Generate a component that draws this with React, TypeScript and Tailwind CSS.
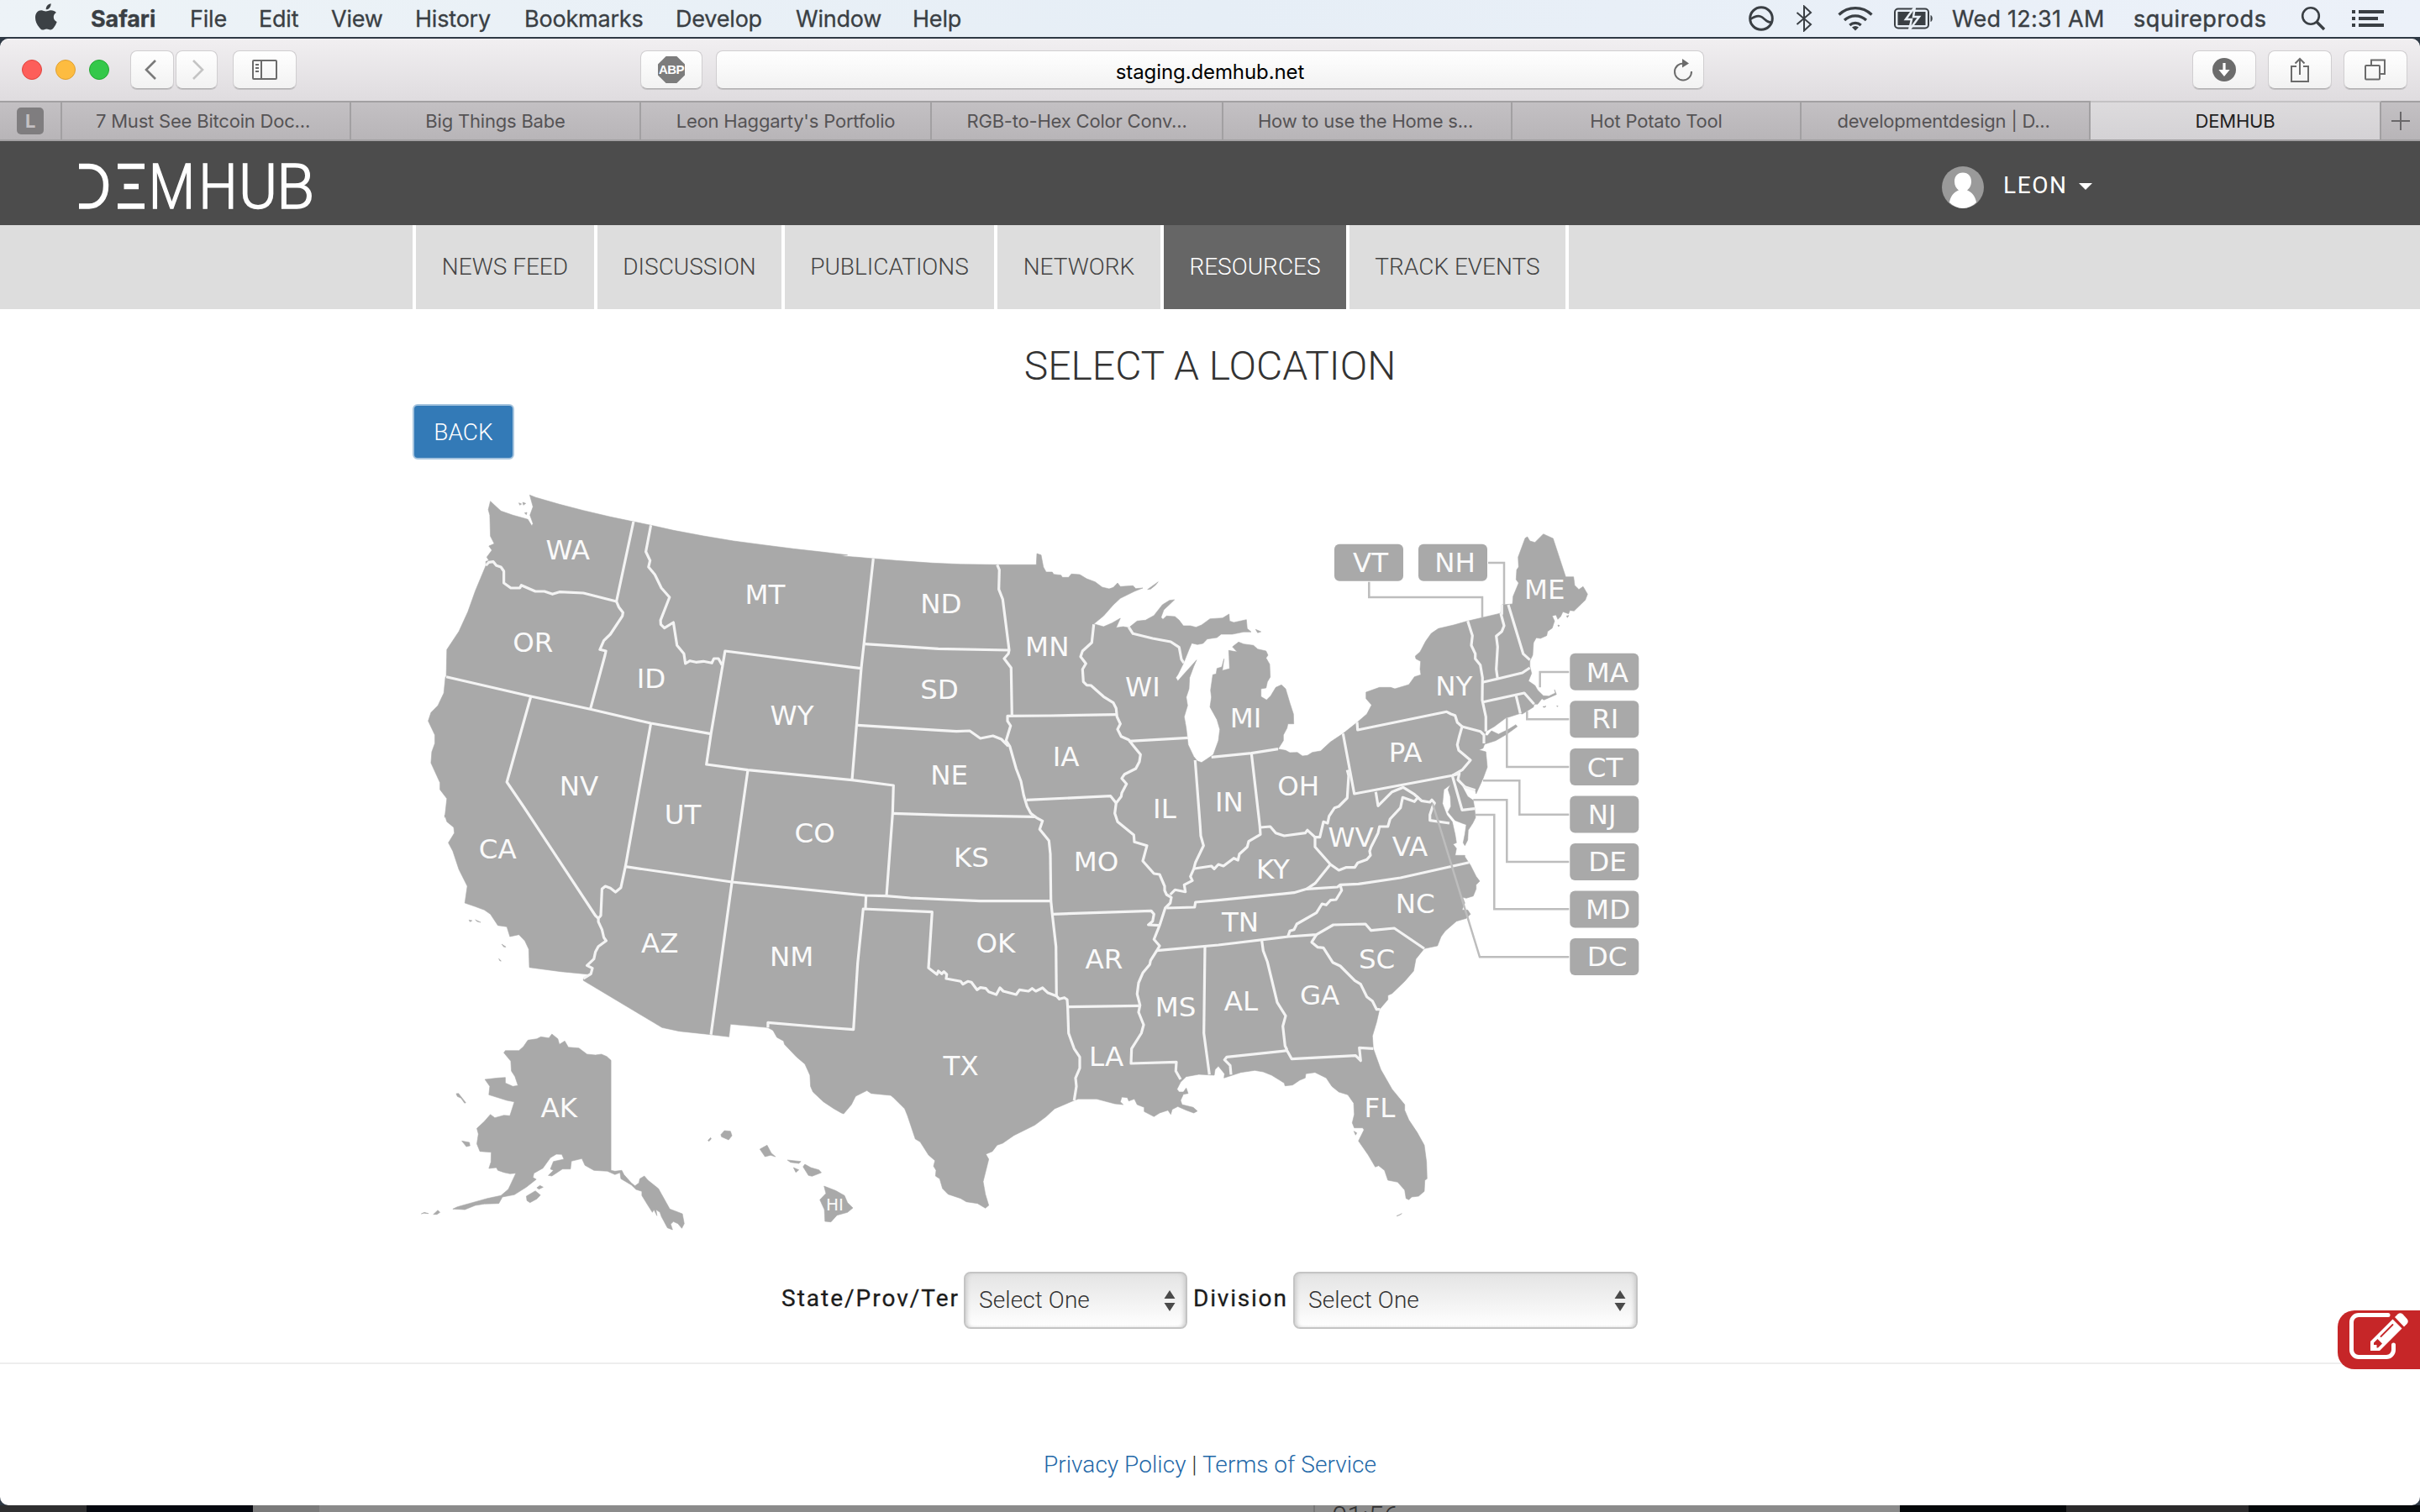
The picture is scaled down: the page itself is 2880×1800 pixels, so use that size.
import React from "react";

type Pt = [number, number];

/* Each sheet turns its own local survey units into map coordinates. */
const sheet =
  (ox: number, oy: number, sx: number, sy: number) =>
  (s: string): Pt[] =>
    s
      .trim()
      .split(/\s+/)
      .map((p) => {
        const [x, y] = p.split(",").map(Number);
        return [ox + x / sx, oy + y / sy] as Pt;
      });

const A = sheet(480, 560, 2.8, 3);
const B = sheet(480, 960, 2.8, 3);
const C = sheet(1000, 640, 3, 3);
const D = sheet(1000, 1000, 3, 3);
const E = sheet(1450, 620, 3, 3);
const F = sheet(1450, 1000, 3, 3);

const line = (...parts: Pt[][]) =>
  "M" + parts.flat().map(([x, y]) => `${x.toFixed(1)} ${y.toFixed(1)}`).join("L");

const mainland = line(
  A("421,88 440,96 520,121 600,143 690,166 767,183 825,196 900,214 1000,234 1100,252 1200,266 1300,280 1400,292 1480,302"),
  C("0,65 60,70 118,75 200,82 330,91 430,95 560,97 700,97 702,57 717,62 725,105 735,123 757,123 762,131 788,134 793,142 815,142 825,130 855,132 880,147 910,158 935,177 960,183 975,178 990,162 1000,175 1045,172 1055,182 1080,180"),
  C("1050,192 1000,217 975,240 940,280 905,308 940,318 970,305 1000,288 985,322 1010,318 1030,322 1060,298 1090,295 1120,278 1150,240 1175,224 1193,222 1180,235 1155,258 1145,285 1152,292 1165,280 1195,282 1210,295 1225,315 1250,315 1270,320 1290,312 1320,290 1365,287 1388,273 1390,298 1405,303 1450,293 1453,325 1467,337 1440,337 1400,345 1360,345 1345,357 1310,362 1295,378 1275,382 1255,377 1245,400 1225,450 1205,490 1198,500 1205,512 1220,495 1272,437 1262,460 1247,500 1245,540 1235,570 1240,600 1228,640 1235,680 1242,740 1262,782 1275,798 1290,803 1310,790 1332,775 1350,725 1355,685 1345,650 1320,605 1325,570 1322,545 1330,490 1342,487 1345,467 1362,462 1370,433 1364,475 1390,468 1388,425 1387,403 1417,408 1400,390"),
  E("72,433 90,440 125,445 140,458 170,465 177,480 170,490 183,512 185,558 175,575 170,597 152,600 152,628 172,640 187,625 205,595 225,586 240,600 255,650 268,690 269,725 248,725 245,740 232,765 232,785 213,815 240,820 255,828 282,827 300,840 318,838 335,827 365,822 400,790 445,760 495,720 530,690 547,658 527,635 527,612 575,595 615,595 630,600 680,585 700,557 723,550 720,530 722,502 705,493 703,483 720,468 740,430 760,402 785,385 840,372 890,358 1008,330 1012,300 1050,297 1052,270 1072,222 1063,210 1065,175 1072,165 1070,130 1095,62 1103,57 1112,72 1130,77 1160,47 1195,63 1240,200 1268,200 1272,230 1287,245 1302,235 1318,262 1310,283 1270,322 1255,320 1250,332 1230,325 1222,342 1212,352 1205,336 1192,340 1200,358 1192,383 1175,395 1172,410 1150,420 1135,418 1125,435 1122,480 1112,500 1112,520 1118,545 1107,572 1130,588 1140,605 1160,625 1180,626 1203,615 1200,603 1207,620 1180,632 1162,640 1155,635 1140,655 1127,655 1125,665 1085,690 1078,688 1025,705 985,735 955,752 952,764 960,768 975,750 1000,762 1035,745 1062,728 1067,735 1030,762 990,785 950,798 945,812 930,818 955,825 960,880 945,920 920,975 917,962 892,955 868,935 858,912 866,940 890,985 910,998 915,1030 918,1060 908,1080 892,1105 890,1140 880,1160 874,1150 880,1120 885,1085 870,1080 845,1070 820,1040 830,1020 828,985 820,960 828,943 805,960 800,1010 815,1050 835,1075 845,1120 850,1150 838,1155 850,1170 845,1195 865,1195 880,1195"),
  F("880,60 900,90 920,130 933,147 920,160 920,175 910,200 885,208 872,205 880,225 870,250 890,250 900,265 885,280 850,290 810,325 795,345 782,378 735,388 705,425 697,468 665,505 620,548 605,555 605,570 575,605 565,650 550,700 553,745 580,820 620,890 665,945 665,965 680,1000 710,1045 735,1090 743,1150 745,1210 737,1215 735,1255 715,1272 690,1275 680,1285 670,1280 665,1250 640,1222 605,1215 593,1180 572,1163 560,1168 535,1125 500,1075 520,1035 515,1028 485,1028 478,1010 485,980 483,940 462,910 430,900 405,880 385,850 345,830 312,835 310,850 290,858 265,875 238,878 235,868 190,840 160,828 130,823 80,830 20,850"),
  D("1372,835 1350,808 1338,820 1335,840 1280,837 1235,845 1215,865 1202,890 1210,900 1225,900 1235,886 1242,905 1225,908 1215,930 1220,945 1260,955 1275,968 1262,975 1235,965 1205,952 1185,962 1180,980 1170,965 1140,975 1120,988 1085,970 1085,955 1060,945 1050,925 1030,932 1025,920 1005,918 1000,935 1010,945 980,942 915,925 850,925 835,930 765,960 735,988 695,1018 620,1055 580,1083 560,1090 543,1112 520,1122 530,1140 510,1220 518,1265 530,1305 518,1315 490,1298 450,1292 430,1280 385,1265 365,1245 355,1210 340,1200 342,1180 333,1165 338,1145 315,1125 285,1078 268,1068 240,985 230,960 190,920 180,912 110,905 95,895 55,915 40,945 12,978 4,975"),
  B("1435,1080 1400,1055 1365,1020 1357,1000 1355,960 1338,920 1310,895 1270,850 1267,838 1245,825 1232,800 1215,790 1090,778 1085,823 1025,815 920,803 862,790 600,622 600,615 620,600 525,590 420,575 418,510 405,480 385,458 355,465 345,430 315,425 290,385 270,370 240,358 205,345 213,285 185,225 165,160 150,130 170,95 168,75 145,55 138,30"),
  A("138,1240 145,1172 122,1140 122,1115 92,1045 95,1005 105,975 105,945 83,895 92,865 115,840 135,795 140,740 143,735 145,640 185,575 215,505 240,430 275,340 275,325 285,322 278,310 295,285 285,270 303,262 290,235 288,160 283,140 290,110 325,145 365,160 400,170 415,175 428,198 432,190 422,160 432,130"),
) + "Z";

const islands = [
  B("692,907 692,1300 705,1303 728,1300 735,1315 760,1345 772,1355 785,1345 788,1330 803,1320 815,1335 850,1365 888,1438 930,1455 936,1490 928,1507 915,1490 900,1483 891,1492 897,1512 880,1505 860,1465 855,1450 842,1440 845,1462 835,1440 830,1450 815,1425 795,1390 795,1375 775,1368 760,1352 725,1330 722,1308 705,1315 680,1303 635,1300 605,1282 595,1258 560,1267 557,1295 530,1295 495,1320 483,1318 500,1300 490,1295 500,1268 535,1260 528,1243 510,1242 490,1255 465,1292 435,1310 432,1325 443,1332 410,1360 370,1387 330,1395 318,1418 270,1420 240,1425 205,1440 165,1438 180,1430 230,1415 280,1400 325,1390 350,1367 375,1310 355,1312 335,1307 315,1300 310,1290 285,1293 292,1270 293,1235 255,1232 245,1205 250,1170 245,1150 270,1125 290,1100 305,1112 335,1103 355,1105 370,1055 345,1050 285,1030 288,1000 272,975 315,970 340,968 340,988 365,1000 382,997 372,965 360,945 358,910 335,880 340,872 385,872 400,858 415,835 445,830 458,823 485,827 495,813 515,830 520,850 538,838 550,860 585,863 612,885 640,888 660,885 678,893"),
  B("410,1392 440,1373 457,1388 445,1402 422,1415 412,1408"),
  B("445,1362 455,1354 466,1360 452,1367"),
  B("195,1195 220,1200 222,1212 210,1215"),
  B("176,1026 184,1025 208,1058 204,1060 192,1042 180,1036"),
  B("100,1457 115,1442 122,1450 112,1457"),
  B("60,1455 70,1450 84,1454 68,1453"),
  B("1058,1172 1070,1158 1090,1160 1095,1176 1084,1191 1060,1180"),
  B("1015,1193 1024,1183 1026,1188 1018,1196"),
  B("1188,1224 1212,1210 1226,1238 1240,1251 1224,1246 1205,1251"),
  B("1280,1263 1325,1268 1318,1275 1290,1271"),
  B("1300,1290 1318,1298 1308,1307"),
  B("1332,1287 1338,1278 1358,1290 1385,1298 1393,1308 1362,1321 1350,1318"),
  B("1402,1356 1440,1372 1470,1390 1480,1415 1498,1434 1480,1450 1445,1460 1425,1484 1405,1482 1403,1440 1388,1405 1408,1382"),
  B("240,405 258,414 246,411"),
  B("219,406 229,408 222,412"),
  B("328,492 342,502 335,502"),
  B("318,544 326,552 322,552"),
  C("1097,185 1135,158 1125,170 1108,184"),
  C("1483,328 1502,336 1490,340"),
  E("1158,664 1170,662 1164,667"),
  E("1208,661 1213,662 1209,664"),
  E("1212,372 1218,374 1214,378"),
  E("1243,340 1251,338 1246,346"),
  F("636,1343 655,1334 646,1340"),
  F("484,1040 494,1046 490,1054"),
  A("385,116 394,120 388,124"),
  A("398,114 408,118 400,124"),
  A("404,152 412,150 410,158"),
]
  .map((p) => line(p) + "Z")
  .join("");

const borders = [
  line(A("275,340 285,328 300,326 310,340 325,345 335,360 335,402 358,420 388,420 393,410 440,432 470,432 497,442 520,434 600,438 710,468")),
  line(A("767,183 710,468 718,488 732,508 730,520 690,585 668,608 655,640 675,645 672,660 623,853")),
  line(A("143,737 425,807 623,853 825,903 1025,941")),
  line(A("825,196 808,290 822,322 817,345 838,372 860,420 887,453 857,535 858,550 870,563 900,543 912,625 935,655 940,690 955,680 975,685 1000,682 1028,688 1035,672 1050,672 1062,695")),
  line(A("1525,707 1072,645 1025,941 1010,1050 1148,1070"), C("42,866 190,885 187,985"), D("165,200")),
  line(C("118,75 75,465 42,866")),
  line(A("425,807 345,1113"), B("400,0 640,390 650,400")),
  line(A("825,903"), B("740,215 725,290 707,306 690,292 673,285 662,295 658,390 650,400 650,412 662,440 668,468 676,480 650,500 640,520 635,545 612,568 630,578 625,598 600,615")),
  line(B("740,215 1095,270 1540,318"), D("165,200 250,207 500,218 750,218")),
  line(A("1148,1070"), B("1095,270 1025,815")),
  line(D("92,195 90,243")),
  line(B("1215,790 1215,772 1400,789 1500,797"), D("62,440 82,246 328,257 315,457 345,480 350,468 362,478 370,470 380,480 378,495 430,505 438,515 455,505 468,508 488,535 500,527 520,530 530,542 557,552 570,528 582,540 628,552 640,535 672,540 685,530 698,540 722,528 740,545 772,557 782,568 800,563 810,570 812,600 815,690 835,745 855,775 855,815 840,850 843,880 835,930")),
  line(C("187,985 400,992 695,997")),
  line(C("88,380 350,397 600,402")),
  line(C("62,670 350,688 415,692 462,690 500,717 545,708 575,720 600,745")),
  line(C("560,97 568,115 566,185 580,220 590,300 603,402 600,415 585,432 610,465 613,635")),
  line(C("985,632 750,636 597,637 597,655 608,672 592,725 605,745 628,825 645,870 655,920 667,960 680,985 700,1000 722,1012 712,1042 745,1082"), D("750,50 752,218 757,265 770,380 772,557")),
  line(C("665,937 965,923 985,948")),
  line(C("905,310 898,375 865,405 858,425 877,450 865,470 868,515 880,527 895,528 940,568 975,590 985,610 988,640 1000,665 990,685 1003,710 1030,722 1045,742 1072,775 1068,800 1055,825 1015,845 1005,860 1022,880 1005,912 1003,925 985,948 980,985 990,1015 1048,1062 1050,1087 1095,1100 1080,1155 1120,1200 1140,1203 1158,1245"), D("1158,180 1165,195 1182,205 1178,225 1160,243 1140,305 1120,355 1140,378 1130,395 1108,430 1105,445 1080,475 1065,510 1060,550 1070,590 1065,615 1083,660 1075,690 1040,745 1038,798 1200,793 1198,825 1215,855")),
  line(C("1030,727 1242,715")),
  line(C("1030,320 1045,343 1115,360 1180,372 1210,392 1218,435 1227,448")),
  line(C("1267,795 1285,1030 1287,1065 1297,1100 1268,1160 1262,1183 1250,1210"), D("1257,145 1228,160 1232,185 1195,178 1178,195")),
  line(C("1325,784 1468,770"), E("213,815")),
  line(E("118,830 148,1090 150,1120 108,1145 103,1165 75,1190 70,1212"), D("1405,65 1368,93 1350,87 1335,103 1325,93 1265,102")),
  line(E("150,1095 185,1092 205,1115 235,1125 310,1115 318,1105 345,1130 362,1130 375,1075 390,1080 395,1055 415,1025 430,1020 460,990 465,910 460,890")),
  line(E("445,760 485,975 835,910 870,890 900,855 858,820 853,800 860,770 870,735 853,720 845,695 830,690 815,682 497,747 495,718")),
  line(E("870,735 935,752 948,765 948,795")),
  line(E("890,358 907,410 903,445 917,475 917,493 935,515 943,560 942,640 955,700 955,752")),
  line(E("1008,330 1020,375 1012,395 992,412 997,450 992,530 997,565")),
  line(E("1012,300 1012,335")),
  line(E("1035,300 1088,475 1112,497")),
  line(E("943,577 1085,543 1112,525")),
  line(E("945,647 1092,615 1127,655")),
  line(E("1063,625 1078,688")),
  line(E("835,910 870,1033 915,1028")),
  line(E("835,910 860,903 855,925 880,950 917,962")),
  line(E("562,968 570,1018 620,968 660,952 700,977 725,1000 755,1005 762,997 772,1008 765,1020 755,1050 755,1070 825,1080")),
  line(E("715,985 700,1003 658,988 650,1025 613,1065 605,1092 575,1092 570,1115 545,1165"), F("540,40 543,55 530,70 497,82 487,98 455,98 430,108 400,87 345,25 345,-10")),
  line(F("400,87 345,155 315,175")),
  line(D("1165,243 1265,240 1268,222"), F("0,215 270,188 315,175 425,168 435,160 500,157 650,135 895,80")),
  line(D("757,265 1110,253 1120,265 1115,290 1100,303 1140,305")),
  line(D("812,596 1065,592")),
  line(D("1130,395"), F("0,375 250,345 350,338 410,303 525,300 545,323 628,315 735,388")),
  line(D("1302,378 1298,690 1318,838")),
  line(F("155,360 160,395 175,435 210,580 240,628 230,665 238,735 245,750")),
  line(F("45,838 42,805 22,785 30,775 245,752 262,782 490,770 508,788 503,742 553,745")),
  line(F("350,338 333,365 355,383 375,385 408,437 435,450 487,502 508,515 530,560 550,575 565,605 577,605")),
  line(F("435,160 440,180 420,213 400,215 385,232 370,228 350,260 280,300 270,320 255,325 248,345")),
];

const leaders = [
  line(E("538,218 538,273 942,273 942,345")),
  line(E("963,150 1020,150 1020,300")),
  line(E("1252,540 1148,540 1148,595")),
  line(E("1252,709 1102,709 1102,680")),
  line(E("1252,879 1030,879 1030,705")),
  line(E("1252,1049 1075,1049 1075,928 945,928")),
  line(E("1252,1218 1030,1218 1030,997 910,997")),
  line(F("1252,247 985,247 985,-90 918,-90")),
  line(F("1252,418 933,418 765,-130")),
];

const badges: Pt[] = [
  [1588, 647.7],
  [1688, 647.7],
  ...[0, 1, 2, 3, 4, 5, 6].map((i) => [1868.3, 777.8 + i * 56.55] as Pt),
];

const tag = (f: (s: string) => Pt[], s: string) =>
  s.split(";").map((e) => {
    const [name, at] = e.trim().split(" ");
    return { name, at: f(at)[0] };
  });

const labels = [
  ...tag(A, "WA 550,320;OR 434,650;MT 1207,478;ID 828,778;NV 587,1162;WY 1297,910"),
  ...tag(B, "UT 933,65;CA 316,187;CO 1373,130;AZ 857,523;NM 1296,572;AK 521,1112"),
  ...tag(C, "ND 362,270;SD 356,577;MN 741,423;WI 1082,567;NE 391,882;IA 808,817;MI 1450,680;IL 1160,1003;IN 1391,980;KS 470,1178;MO 916,1192"),
  ...tag(D, "OK 557,402;AR 944,460;TX 433,840;LA 952,808;MS 1199,632;AL 1433,610;TN 1430,328"),
  ...tag(E, "VT 545,184;NH 847,184;ME 1167,280;NY 843,625;PA 670,863;OH 288,982;WV 475,1165;VA 686,1198;MA 1391,577;RI 1383,743;CT 1382,915;NJ 1372,1083"),
  ...tag(F, "KY 197,138;NC 705,262;SC 568,460;GA 364,588;FL 578,990;DE 1391,112;MD 1393,284;DC 1390,450"),
];

function StateMap() {
  return (
    <svg viewBox="490 580 1470 890" className="ml-[490px] block h-[890px] w-[1470px]">
      <path d={mainland + islands} fill="#a9a9a9" stroke="#a9a9a9" strokeWidth="0.6" strokeLinejoin="round" />
      <g fill="none" stroke="#f4f4f4" strokeWidth="3.200" strokeLinejoin="round">
        {borders.map((d) => (
          <path key={d} d={d} />
        ))}
      </g>
      <g fill="none" stroke="#bdbdbd" strokeWidth="2.500">
        {leaders.map((d) => (
          <path key={d} d={d} />
        ))}
      </g>
      {badges.map(([x, y]) => (
        <rect key={`${x}-${y}`} x={x} y={y} width="82" height="44" rx="6" fill="#a9a9a9" />
      ))}
      <g fill="#fafafa" textAnchor="middle" fontFamily="'DejaVu Sans', sans-serif" fontSize="32.500">
        {labels.map((l) => (
          <text key={l.name} x={l.at[0] - 0.7} y={l.at[1] - 0.3}>
            {l.name}
          </text>
        ))}
        <text x="993.5" y="1441" fontSize="20">
          HI
        </text>
      </g>
    </svg>
  );
}

const menus = [
  { t: "Safari", c: "w-[118px] font-bold tracking-[-0.1px]" },
  { t: "File", c: "w-[82px]" },
  { t: "Edit", c: "w-[86px]" },
  { t: "View", c: "w-[100px]" },
  { t: "History", c: "w-[130px]" },
  { t: "Bookmarks", c: "w-[180px]" },
  { t: "Develop", c: "w-[143px]" },
  { t: "Window", c: "w-[139px]" },
  { t: "Help", c: "w-[80px]" },
];

function MenuBar() {
  return (
    <div className="flex h-11 items-center bg-linear-to-r from-[#edf3f7] via-[#e6eef6] to-[#ecf1f9] font-['Inter',sans-serif] text-[27px] leading-none tracking-[-0.2px] whitespace-nowrap text-[#3a3f44] [-webkit-text-stroke:0.3px]">
      <svg viewBox="0 0 26 32" className="mt-[-4px] ml-[42px] h-8 w-[26px]" fill="#3c4145">
        <path d="M18.6 0.3c.2 1.900-.5 3.700-1.700 5.100-1.200 1.300-2.700 2-4.200 1.900-.2-1.800.6-3.600 1.700-4.800C15.600 1.200 17.300.4 18.600.3Z" />
        <path d="M24.900 10.900c-2 1.200-3.100 2.900-3.100 5.300 0 2.700 1.500 4.800 3.900 5.700-.9 2.700-2.200 5.100-3.800 7.200-1.100 1.400-2.200 2.400-4 2.400-1.700 0-2.300-1-4.400-1-2.100 0-2.800 1-4.400 1.100-1.700 0-2.900-1.200-4.100-2.700C1.600 25.200 0 21.100 0 17c0-5.500 3.300-8.800 7.100-8.800 2 0 3.900 1.300 5.500 1.300 1.500 0 3.500-1.400 6-1.300 2.600 0 4.800 1 6.300 2.700Z" />
      </svg>
      <div className="ml-[40px] flex">
        {menus.map((m) => (
          <span key={m.t} className={m.c}>
            {m.t}
          </span>
        ))}
      </div>
      <div className="ml-auto flex items-center">
        <svg viewBox="0 0 30 30" className="mr-[26px] h-[30px] w-[30px]" fill="none" stroke="#3a3f44" strokeWidth="3">
          <circle cx="15" cy="15" r="13.300" />
          <path d="M2 16c5-3.500 9-4.500 12-3.500 5 1.500 7 8 13 7" strokeWidth="2.600" />
        </svg>
        <svg viewBox="0 0 20 32" className="mr-[30px] h-8 w-5" fill="none" stroke="#3a3f44" strokeWidth="2">
          <path d="M1.500 9 18 23l-8 7.500V1.500L18 9 1.500 23" />
        </svg>
        <svg viewBox="0 0 42 30" className="mr-[25px] h-[30px] w-[42px]" fill="none" stroke="#3a3f44" strokeWidth="3.200">
          <path d="M1.500 10.500a28 28 0 0 1 39 0M8 17a19 19 0 0 1 26 0M14.300 23a10 10 0 0 1 13.400 0" />
          <path d="M21 29.500l-4-4a6 6 0 0 1 8 0Z" fill="#3a3f44" stroke="none" />
        </svg>
        <svg viewBox="0 0 47 26" className="mr-[22px] h-[26px] w-[47px]" fill="none" stroke="#3a3f44" strokeWidth="2">
          <rect x="1" y="1.500" width="40" height="23" rx="4" />
          <rect x="4.500" y="5" width="33" height="16" fill="#3a3f44" stroke="none" />
          <path d="M25 -1 14 14h7l-3 13 12-16h-7z" fill="#3a3f44" stroke="#eaf0f7" strokeWidth="2.500" />
          <path d="M43.500 9c3 1 3 7 0 8z" fill="#3a3f44" stroke="none" />
        </svg>
        <span className="w-[216px] tracking-[0.250px]">Wed 12:31 AM</span>
        <span className="w-[199px] tracking-[0.600px] [-webkit-text-stroke:0.5px]">squireprods</span>
        <svg viewBox="0 0 30 30" className="mr-[31px] h-[30px] w-[30px]" fill="none" stroke="#3a3f44" strokeWidth="2.600">
          <circle cx="12" cy="12" r="9.800" />
          <path d="M19 19l9 9" strokeWidth="3.400" />
        </svg>
        <svg viewBox="0 0 38 22" className="mr-[43px] h-[22px] w-[38px]" fill="#3a3f44">
          <path d="M0 1h4v4H0zM8 1h30v4H8zM0 9h4v4H0zM8 9h23v4H8zM0 17h4v4H0zM8 17h30v4H8z" />
        </svg>
      </div>
    </div>
  );
}

const key =
  "flex h-[46px] shrink-0 items-center justify-center rounded-[8px] border border-[#d0ced0] border-b-[#b0aeb0] bg-linear-to-b from-white to-[#f2f2f2] shadow-[0_1px_0_#c6c4c6]";

function Toolbar() {
  return (
    <div className="flex h-[74px] items-center rounded-t-[10px] bg-linear-to-b from-[#f1eff1] to-[#dfdcdf]">
      <div className="ml-[26px] flex w-[129px] shrink-0 gap-4">
        <i className="h-6 w-6 rounded-full border border-[#e0443e] bg-[#fd5e5a]" />
        <i className="h-6 w-6 rounded-full border border-[#dea033] bg-[#fdbc40]" />
        <i className="h-6 w-6 rounded-full border border-[#24a732] bg-[#34c84a]" />
      </div>
      <div className={`${key} w-[52px]`}>
        <svg viewBox="0 0 14 24" className="mr-1 h-6 w-[14px]" fill="none" stroke="#7a7a7a" strokeWidth="2.600">
          <path d="M13 1 2 12l11 11" />
        </svg>
      </div>
      <div className={`${key} ml-0.5 w-[50px]`}>
        <svg viewBox="0 0 14 24" className="ml-1 h-6 w-[14px]" fill="none" stroke="#c4c4c4" strokeWidth="2.600">
          <path d="M1 1l11 11L1 23" />
        </svg>
      </div>
      <div className={`${key} ml-[18px] w-[76px]`}>
        <svg viewBox="0 0 30 24" className="h-6 w-[30px]" fill="none" stroke="#6b6b6b" strokeWidth="2">
          <rect x="1" y="1" width="28" height="22" rx="1" />
          <path d="M11 1v22M4 6h4M4 10h4M4 14h4" />
        </svg>
      </div>
      <div className={`${key} ml-[409px] w-[74px]`}>
        <div className="flex h-8 w-8 items-center justify-center bg-[#7c7c7c] font-['Liberation_Sans',sans-serif] text-[15px] font-bold tracking-[-0.5px] text-white [clip-path:polygon(30%_0,70%_0,100%_30%,100%_70%,70%_100%,30%_100%,0_70%,0_30%)]">
          ABP
        </div>
      </div>
      <div className={`${key} relative ml-4 w-[1176px] font-['Inter',sans-serif] text-[24px] tracking-[-0.1px] text-black`}>
        <span className="mt-[5px]">staging.demhub.net</span>
        <svg viewBox="0 0 24 28" className="absolute top-[8px] right-3 h-7 w-6" fill="none" stroke="#6b6b6b" strokeWidth="2">
          <path d="M13 6.500A10 10 0 1 0 22 16" />
          <path d="M11 1l8 5.500-8 5z" fill="#6b6b6b" stroke="none" />
        </svg>
      </div>
      <div className="mr-[15px] ml-auto flex gap-3.5">
        <div className={`${key} w-[76px]`}>
          <svg viewBox="0 0 28 28" className="h-7 w-7">
            <circle cx="14" cy="14" r="14" fill="#6b6b6b" />
            <path d="M12.400 6h3.200v8h5L14 22l-6.600-8h5z" fill="#fff" />
          </svg>
        </div>
        <div className={`${key} w-[76px]`}>
          <svg viewBox="0 0 24 30" className="h-[30px] w-6" fill="none" stroke="#6b6b6b" strokeWidth="2">
            <path d="M8 11H2v18h20V11h-6M12 21V2M6.500 7.500 12 2l5.500 5.500" />
          </svg>
        </div>
        <div className={`${key} w-[76px]`}>
          <svg viewBox="0 0 26 26" className="h-[26px] w-[26px]" fill="none" stroke="#6b6b6b" strokeWidth="2">
            <rect x="1" y="8" width="17" height="16.500" rx="1" />
            <path d="M8 8V1.500h16V18h-6" />
          </svg>
        </div>
      </div>
    </div>
  );
}

const tabs = [
  { t: "7 Must See Bitcoin Doc...", c: "w-[344px] pr-[7px]" },
  { t: "Big Things Babe", c: "w-[345px]" },
  { t: "Leon Haggarty's Portfolio", c: "w-[346px]" },
  { t: "RGB-to-Hex Color Conv...", c: "w-[347px]" },
  { t: "How to use the Home s...", c: "w-[344px] pr-1" },
  { t: "Hot Potato Tool", c: "w-[344px]" },
  { t: "developmentdesign | D...", c: "w-[344px] pr-1" },
];

function TabStrip() {
  return (
    <div className="flex h-12 border-y-2 border-[#a2a0a2] bg-linear-to-b from-[#c3c0c3] to-[#b8b5b8] font-['Inter',sans-serif] text-[22px] tracking-[-0.2px] whitespace-nowrap text-[#555355]">
      <div className="flex w-[74px] shrink-0 items-center border-r-2 border-[#a2a0a2] pl-5">
        <div className="flex h-8 w-8 items-center justify-center rounded-[5px] bg-[#7f7d7f] text-[22px] font-bold text-[#c3c0c3]">L</div>
      </div>
      {tabs.map((tab) => (
        <div key={tab.t} className={`flex shrink-0 items-center justify-center border-r-2 border-[#a2a0a2] ${tab.c}`}>
          {tab.t}
        </div>
      ))}
      <div className="-mt-0.5 flex w-[346px] shrink-0 items-center justify-center border-t-2 border-r-2 border-[#a2a0a2] border-t-[#c4c2c4] bg-linear-to-b from-[#dddbdd] to-[#d4d2d5] text-[#222]">
        DEMHUB
      </div>
      <div className="flex flex-1 items-center justify-center">
        <svg viewBox="0 0 22 22" className="h-[22px] w-[22px]" stroke="#6a686a" strokeWidth="2">
          <path d="M11 0v22M0 11h22" />
        </svg>
      </div>
    </div>
  );
}

function SiteHeader() {
  return (
    <div className="flex h-[100px] bg-[#4c4c4c] font-['Roboto',sans-serif]">
      <svg viewBox="94 0 280 100" className="ml-[94px] h-[100px] w-[280px]" fill="none" stroke="#fff" strokeWidth="6.400">
        <path d="M94 30h12c12 0 20 9 20 21.500v2C126 67 118 77.500 106 77.500H94" />
        <path d="M140 30h32M147.500 54H165M140 77.500h32" />
        <g fill="#fff" stroke="#fff" strokeWidth="1.500" fontFamily="Roboto, sans-serif" fontWeight="300" fontSize="74.500">
          <text transform="translate(176.800 80) scale(0.86 1)">M</text>
          <text transform="translate(236.200 80) scale(0.88 1)">H</text>
          <text transform="translate(284 80) scale(0.94 1)">U</text>
          <text transform="translate(329 80) scale(0.99 1)">B</text>
        </g>
      </svg>
      <div className="mr-[390px] ml-auto flex h-[100px] items-center text-white">
        <svg viewBox="0 0 50 50" className="mt-[10px] mr-[-1px] ml-px h-[50px] w-[50px]">
          <circle cx="25" cy="25" r="25" fill="#9a9a9a" />
          <path d="M25 7.500c6.500 0 10 4.500 10 10.500 0 5-2 8-5 10.500 6 2 10 8 11 14.500A24.800 24.800 0 0 1 25 50 24.800 24.800 0 0 1 9 43c1-6.500 5-12.500 11-14.500-3-2.500-5-5.500-5-10.500C15 12 18.500 7.500 25 7.500Z" fill="#fff" />
        </svg>
        <span className="mt-[6px] ml-[24px] w-[90px] text-[28px] tracking-[1.600px]">LEON</span>
        <svg viewBox="0 0 16 8" className="mt-[8px] h-2 w-4" fill="#fff">
          <path d="M0 0h16L8 8z" />
        </svg>
      </div>
    </div>
  );
}

const nav = [
  { t: "NEWS FEED", c: "w-[216px]" },
  { t: "DISCUSSION", c: "w-[223px]" },
  { t: "PUBLICATIONS", c: "w-[253px]" },
  { t: "NETWORK", c: "w-[198px]" },
  { t: "RESOURCES", c: "w-[221px] bg-[#666] text-white" },
  { t: "TRACK EVENTS", c: "w-[265px] border-r-4" },
];

function SelectBox({ className }: { className: string }) {
  return (
    <div
      className={`flex h-[68px] shrink-0 items-center justify-between rounded-[8px] border-2 border-[#c4c4c4] bg-linear-to-b from-[#e4e4e4] to-white pr-[12px] pl-4 text-[28px] font-light tracking-[0.1px] text-[#333] shadow-[inset_4px_0_5px_-2px_#ccc,inset_-4px_0_5px_-2px_#ccc] ${className}`}
    >
      <span>Select One</span>
      <svg viewBox="0 0 14 25" className="h-[25px] w-[14px]" fill="#4a4a4a">
        <path d="M7 0l6.500 10H.5zM7 25l6.500-10H.5z" />
      </svg>
    </div>
  );
}

export default function App() {
  return (
    <div className="flex h-[1800px] w-[2880px] flex-col overflow-hidden bg-[#2f3945]">
      <MenuBar />
      <div className="mt-0.5 flex h-[1746px] flex-col overflow-hidden rounded-[10px] bg-white">
        <Toolbar />
        <TabStrip />
        <SiteHeader />
        <div className="flex h-[100px] bg-[#ddd] pl-[491px] font-['Roboto',sans-serif] text-[28px] font-light whitespace-nowrap text-[#444]">
          {nav.map((n) => (
            <div key={n.t} className={`flex items-center justify-center border-l-4 border-white ${n.c}`}>
              {n.t}
            </div>
          ))}
        </div>
        <div className="flex flex-1 flex-col font-['Roboto',sans-serif]">
          <h1 className="mt-[38px] text-center text-[48px] leading-[60px] font-light text-[#333]">SELECT A LOCATION</h1>
          <button className="mt-[15px] ml-[491px] h-[66px] w-[121px] rounded-[6px] border-2 border-[#a6c4de] bg-[#337ab7] pt-px text-[28px] font-light text-white">
            BACK
          </button>
          <div className="mt-[33px]">
            <StateMap />
          </div>
          <div className="mt-[44px] ml-[930px] flex h-[68px] items-center text-[28px] whitespace-nowrap text-[#1c1c1c]">
            <span className="-mt-[5px] w-[217px] tracking-[2px] [-webkit-text-stroke:0.3px]">State/Prov/Ter</span>
            <SelectBox className="w-[266px]" />
            <span className="-mt-[5px] ml-[7px] w-[119px] tracking-[1.800px] [-webkit-text-stroke:0.3px]">Division</span>
            <SelectBox className="w-[410px]" />
          </div>
          <div className="mt-[40px] h-0.5 bg-[#eee]" />
          <div className="mt-[100px] text-center text-[28px] leading-[40px] font-light tracking-[0.050px] text-[#333]">
            <span className="text-[#2368a8]">Privacy Policy</span> | <span className="text-[#2368a8]">Terms of Service</span>
          </div>
        </div>
      </div>
      <div className="-mt-[10px] flex h-[18px] overflow-hidden pt-[10px]">
        <i className="w-[103px] bg-[#2f2f30]" />
        <i className="w-[198px] bg-[#05080f]" />
        <i className="w-[79px] bg-[#7a7a7a]" />
        <i className="w-[1183px] bg-[#8b8b8b]" />
        <div className="h-2 w-[698px] overflow-hidden border-l-2 border-[#777] bg-[#8b8b8b] pl-5 font-['Roboto',sans-serif] text-[33px] leading-[27px] font-light text-[#333]">01:56</div>
        <i className="w-[198px] bg-[#05080a]" />
        <i className="w-[217px] bg-[#2b2a2b]" />
        <i className="flex-1 bg-[#05090b]" />
      </div>
      <div className="absolute top-[1560px] left-[2782px] h-[70px] w-[98px] rounded-l-[20px] bg-[#c62628]">
        <svg viewBox="0 0 98 70" className="h-[70px] w-[98px]" fill="none" stroke="#fff" strokeWidth="5" strokeLinecap="round">
          <path d="M60 5.500H25a8.500 8.500 0 0 0-8.500 8.500v33a8.500 8.500 0 0 0 8.500 8.500h33a8.500 8.500 0 0 0 8.500-8.500v-6" />
          <path d="M39 48V37L65.500 10.500 76.500 21.500 50 48z" fill="#fff" stroke="none" />
          <path d="M68 8l3.500-3.500q3-2.500 6 0l5 5.500q2.500 3 0 6L79 19.500z" fill="#fff" stroke="none" />
          <path d="M51.500 31 65.500 17" stroke="#c62628" strokeWidth="1.800" />
          <path d="M43 38.500l4.500-4.500 5.500 5.500-5 5h-1.500v-3.500H43z" fill="#c62628" stroke="none" />
        </svg>
      </div>
    </div>
  );
}
